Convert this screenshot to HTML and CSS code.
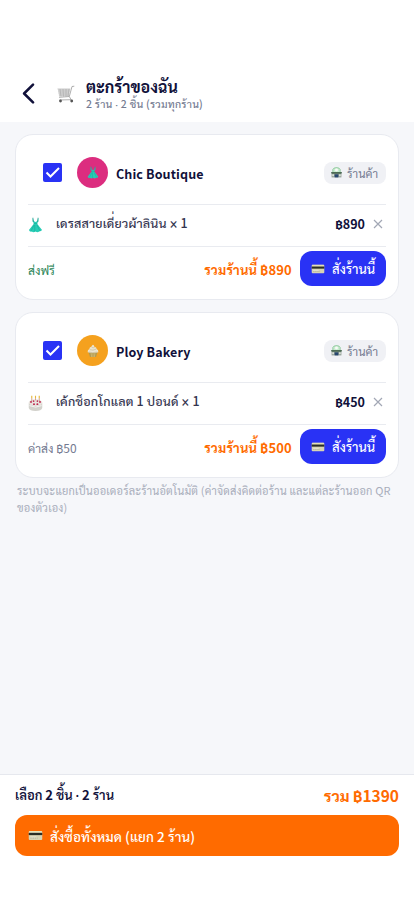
FILE: index.html
```html
<!DOCTYPE html>
<html lang="th">
<head>
<meta charset="utf-8">
<meta name="viewport" content="width=device-width, initial-scale=1">
<title>ตะกร้าของฉัน</title>
<link rel="stylesheet" href="styles.css">
</head>
<body>
<svg class="sprite" aria-hidden="true">
  <defs>
    <symbol id="card" viewBox="0 0 20 14"><rect x="1" y="1" width="18" height="12" rx="1.3" fill="#d8d4b3"/><path d="M1 3.5h18v3H1z" fill="#292d25"/><path d="M1.5 1.7h17" stroke="#eee8b9"/><path d="M3 9h8" stroke="#e6e4d2" stroke-width="1.5"/><path d="M3 10.5h10" stroke="#a9ad9a" stroke-dasharray="2 1"/></symbol>
    <symbol id="dress" viewBox="0 0 20 22"><path d="M6 1v5l2 3-7 9q1 3 4 2 2 2 5 0 3 2 5 0 3 0 4-2l-7-9 2-3V1l-2 5-2 1-2-1z" fill="#25cdb5"/><path d="M7 9h6M8 11 4 19m5-8v9m3-9 4 8" stroke="#139c8b" stroke-width=".6" fill="none"/><path d="m6.5 1 .5 6m6.5-6L13 7" stroke="#27998e"/></symbol>
    <symbol id="store" viewBox="0 0 18 18"><path d="M3 9V4q1-3 6-3t6 3v5" fill="#c9eccf" stroke="#66b47a"/><circle cx="9" cy="5" r="2.4" fill="#f8faf8"/><path d="M1 9h16v8H1z" fill="#8d9a92"/><path d="M0 8h18l-1 3H1z" fill="#4d6b55"/><path d="M2 12h3v3H2zm11 0h3v3h-3z" fill="#dae2d8"/><path d="M6 12h6v5H6z" fill="#27466e"/></symbol>
    <symbol id="cupcake" viewBox="0 0 18 20"><path d="m2 11 2.5 8h9l2.5-8z" fill="#b39a50"/><path d="m6 12 1 7m2-7v7m3-7-1 7" stroke="#e0cd8c" stroke-width=".8"/><path d="M1 12q-.5-4 2.500-5 0-3 3-3.500Q7.500 1 9 .5q2 1 2 3 3.500.5 3.500 3.500 3 1 2.500 5-3 1-8 1t-8-1" fill="#ece5d2"/><path d="M4 8q5 2 10-1M7 4.500q2 1.500 4.500 0M2.500 11.500q6 2 13 0" stroke="#bfae82" stroke-width=".8" fill="none"/></symbol>
    <symbol id="cake" viewBox="0 0 20 21"><path d="M1 10v7q1 4 9 4t9-4v-7z" fill="#d3d2cc"/><ellipse cx="10" cy="10" rx="9" ry="4.500" fill="#e9e3de"/><path d="M5 8V4m5 3V4m5 4V4" stroke="#c98" stroke-width="1.200"/><path d="M5 4V.8M10 4V.8M15 4V.8" stroke="#e6b83c" stroke-width="1.500"/><g fill="#bd294e"><circle cx="4" cy="9" r="1.300"/><circle cx="8" cy="12" r="1.300"/><circle cx="12.500" cy="12" r="1.300"/><circle cx="16" cy="9" r="1.300"/><circle cx="7.500" cy="8" r="1.100"/><circle cx="12.500" cy="8" r="1.100"/></g><path d="M2 14q8 4 16 0" stroke="#fff" fill="none"/></symbol>
    <symbol id="cart" viewBox="0 0 18 18"><path d="m1 4 12 0-1 7-10 .5z" fill="#dedede"/><path d="M.5 4h12.8M1 6h12M1.5 8h11M2 10h10M3 4l1 7.5M6 4l.5 7.5M9 4v7.5M12 4l-1 7" stroke="#a6a6a6" stroke-width=".6"/><path d="M17.3 1.2 15 1.5 12.3 11.5 2 12.3M12.3 11.5l1.8 3.2-11.5.3" stroke="#999" fill="none" stroke-width=".8"/><g fill="#555"><circle cx="3.5" cy="16" r="1.4"/><circle cx="14.7" cy="16" r="1.4"/></g></symbol>
  </defs>
</svg>
<header class="top">
  <svg class="back" viewBox="0 0 12 20"><path d="M10.3 1.5 1.8 10l8.5 8.5"/></svg>
  <svg class="cart"><use href="#cart"/></svg>
  <div class="heading"><h1>ตะกร้าของฉัน</h1><p>2 ร้าน <i>·</i> 2 ชิ้น (รวมทุกร้าน)</p></div>
</header>
<main class="content">
  <section class="shop">
    <div class="shop-head">
      <span class="check"><svg viewBox="0 0 19 19"><path d="m3.500 9.500 4 4 8.500-8.500"/></svg></span>
      <span class="avatar pink"><svg class="i-dress"><use href="#dress"/></svg></span>
      <h2>Chic Boutique</h2>
      <span class="tag"><svg><use href="#store"/></svg><span>ร้านค้า</span></span>
    </div>
    <div class="item"><svg class="thumb"><use href="#dress"/></svg><span class="name">เดรสสายเดี่ยวผ้าลินิน <i>×</i> 1</span><b class="price">฿890</b><svg class="remove" viewBox="0 0 10 10"><path d="m1 1 8 8m0-8-8 8"/></svg></div>
    <div class="summary"><span class="ship free">ส่งฟรี</span><b class="sub">รวมร้านนี้ ฿890</b><button class="order"><svg><use href="#card"/></svg><span>สั่งร้านนี้</span></button></div>
  </section>
  <section class="shop">
    <div class="shop-head">
      <span class="check"><svg viewBox="0 0 19 19"><path d="m3.500 9.500 4 4 8.500-8.500"/></svg></span>
      <span class="avatar amber"><svg class="i-cup"><use href="#cupcake"/></svg></span>
      <h2>Ploy Bakery</h2>
      <span class="tag"><svg><use href="#store"/></svg><span>ร้านค้า</span></span>
    </div>
    <div class="item"><svg class="thumb"><use href="#cake"/></svg><span class="name">เค้กช็อกโกแลต 1 ปอนด์ <i>×</i> 1</span><b class="price">฿450</b><svg class="remove" viewBox="0 0 10 10"><path d="m1 1 8 8m0-8-8 8"/></svg></div>
    <div class="summary"><span class="ship">ค่าส่ง ฿50</span><b class="sub">รวมร้านนี้ ฿500</b><button class="order"><svg><use href="#card"/></svg><span>สั่งร้านนี้</span></button></div>
  </section>
  <p class="note">ระบบจะแยกเป็นออเดอร์ละร้านอัตโนมัติ (ค่าจัดส่งคิดต่อร้าน และแต่ละร้านออก QR<br>ของตัวเอง)</p>
</main>
<footer class="bar">
  <div class="totals"><span class="count">เลือก 2 ชิ้น <i>·</i> 2 ร้าน</span><b class="total">รวม ฿1390</b></div>
  <button class="all"><svg><use href="#card"/></svg><span>สั่งซื้อทั้งหมด (แยก 2 ร้าน)</span></button>
</footer>
</body>
</html>
```
FILE: styles.css
```css
* { box-sizing: border-box; }
body { margin: 0; height: 900px; display: flex; flex-direction: column; background: #fff; color: #11113a; font-family: "Noto Sans CJK SC", Sarabun, sans-serif; font-size: 13px; line-height: 18px; }
h1, h2, p { margin: 0; }
i { font-family: Sarabun, sans-serif; font-style: normal; }
svg { display: block; flex: none; }
button { border: 0; font: inherit; color: #fff; text-align: left; }
.sprite { position: absolute; width: 0; height: 0; }
.top { height: 122px; padding: 64px 22px 0; display: flex; align-items: center; flex: none; }
.back { width: 13px; height: 21px; fill: none; stroke: #11113a; stroke-width: 2.4; stroke-linecap: round; stroke-linejoin: round; }
.cart { width: 18px; height: 18px; margin: 2px 11px 0 22px; }
.heading { white-space: nowrap; }
h1 { font-size: 16px; line-height: 20px; font-weight: 700; }
.heading p { font-size: 10.5px; line-height: 15px; font-weight: 500; color: #747b91; letter-spacing: .24px; }
.content { flex: 1; background: #f6f7fa; padding: 12px 15px 0; }
.shop { height: 166px; margin-bottom: 12px; padding: 0 12px; background: #fff; border: 1px solid #e8eaf0; border-radius: 18px; }
.shop-head { height: 69px; padding: 6px 0 0 15px; display: flex; align-items: center; }
.check { width: 19px; height: 19px; background: #2932f5; border-radius: 2px; }
.check path { fill: none; stroke: #fff; stroke-width: 2; }
.avatar { width: 31px; height: 31px; margin-left: 15px; border-radius: 50%; display: grid; place-items: center; }
.pink { background: #dc2d7f; }
.amber { background: #f5a11e; }
.i-dress { width: 12px; height: 13px; }
.i-cup { width: 12px; height: 14px; }
h2 { margin-left: 8px; flex: 1; font-size: 12.5px; line-height: 18px; font-weight: 700; padding-top: 2px; letter-spacing: .12px; }
.tag { width: 62px; height: 22px; padding: 0 7px; border-radius: 8px; background: #f0f1f5; color: #747b91; font-size: 11.5px; display: flex; align-items: center; gap: 5px; white-space: nowrap; }
.tag svg { width: 11px; height: 11px; }
.item { height: 42px; border-top: 1px solid #e9ebf0; display: flex; align-items: center; padding: 0 3px 4px 0; }
.thumb { width: 15px; height: 16px; margin-top: 3px; }
.name { margin-left: 13px; flex: 1; font-size: 12.5px; line-height: 18px; padding-bottom: 1px; font-weight: 500; color: #34344f; white-space: nowrap; letter-spacing: .16px; }
.price { font-size: 12.5px; font-weight: 700; }
.remove { width: 10px; height: 10px; margin-left: 8px; fill: none; stroke: #a2a7b5; stroke-width: 1.2; }
.summary { height: 52px; border-top: 1px solid #e9ebf0; display: flex; align-items: flex-start; padding-top: 4px; line-height: 37px; white-space: nowrap; }
.ship { flex: 1; font-size: 12px; color: #747b91; }
.free { color: #2d8659; }
.sub { font-size: 13px; color: #ff6b00; margin-right: 8px; letter-spacing: .2px; }
.order { width: 86px; height: 35px; padding: 0 0 0 11px; border-radius: 12px; background: #2932f5; display: flex; align-items: center; gap: 7px; font-size: 13px; font-weight: 500; }
.order svg { width: 14px; height: 10px; }
.note { margin: -8px 0 0 2px; font-size: 11px; line-height: 17px; color: #a8adbb; white-space: nowrap; letter-spacing: .17px; }
.bar { height: 126px; border-top: 1px solid #e6e8ee; padding: 9px 15px 0; flex: none; }
.totals { height: 31px; display: flex; justify-content: space-between; line-height: 22px; }
.count { font-size: 13px; font-weight: 600; }
.total { font-size: 15.5px; color: #ff6b00; }
.all { width: 100%; height: 41px; border-radius: 12px; background: #ff6b00; padding: 0 13px; display: flex; align-items: center; gap: 7px; font-size: 13.5px; font-weight: 500; letter-spacing: .1px; }
.all svg { width: 15px; height: 11px; }
```
